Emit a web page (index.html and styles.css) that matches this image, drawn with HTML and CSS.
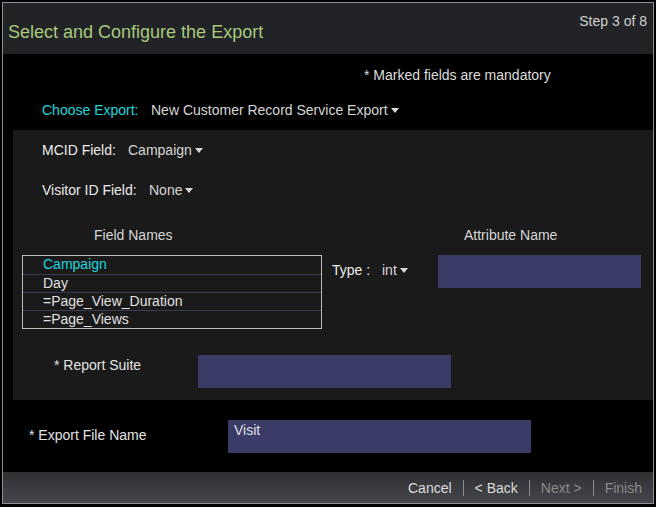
FILE: index.html
```html
<!DOCTYPE html>
<html>
<head>
<meta charset="utf-8">
<link rel="stylesheet" href="styles.css">
</head>
<body>
<div class="frame">
  <header class="header">
    <h1 class="title">Select and Configure the Export</h1>
    <div class="step">Step 3 of 8</div>
  </header>
  <main class="main">
    <div class="mandatory">* Marked fields are mandatory</div>
    <div class="choose">
      <span class="choose-label">Choose Export:</span>
      <span class="dropdown">New Customer Record Service Export<span class="caret"></span></span>
    </div>
    <section class="panel">
      <div class="field mcid">
        <span class="label">MCID Field:</span>
        <span class="dropdown">Campaign<span class="caret"></span></span>
      </div>
      <div class="field visitor">
        <span class="label">Visitor ID Field:</span>
        <span class="dropdown">None<span class="caret"></span></span>
      </div>
      <div class="col-heads">
        <span class="head-fields">Field Names</span>
        <span class="head-attr">Attribute Name</span>
      </div>
      <div class="mapping">
        <ul class="list">
          <li class="selected">Campaign</li>
          <li>Day</li>
          <li>=Page_View_Duration</li>
          <li>=Page_Views</li>
        </ul>
        <div class="type">
          <span class="type-label">Type :</span>
          <span class="dropdown">int<span class="caret"></span></span>
        </div>
        <div class="input attr-input"></div>
      </div>
      <div class="suite">
        <span class="suite-label">* Report Suite</span>
        <div class="input suite-input"></div>
      </div>
    </section>
    <div class="filename">
      <span class="filename-label">* Export File Name</span>
      <div class="input filename-input">Visit</div>
    </div>
  </main>
  <footer class="footer">
    <span class="btn">Cancel</span>
    <span class="sep"></span>
    <span class="btn">&lt; Back</span>
    <span class="sep"></span>
    <span class="btn disabled">Next &gt;</span>
    <span class="sep"></span>
    <span class="btn disabled">Finish</span>
  </footer>
</div>
</body>
</html>
```
FILE: styles.css
```css
html, body {
  margin: 0;
  padding: 0;
  background: #000;
}
body {
  font-family: "Liberation Sans", Arial, sans-serif;
  font-size: 14px;
  color: #e2e2e2;
}
.frame {
  margin: 2px;
  width: 650px;
  height: 500px;
  border: 1px solid #8e8e8e;
  background: #000;
  display: flex;
  flex-direction: column;
}
.header {
  height: 51px;
  background: #222327;
  display: flex;
  justify-content: space-between;
  align-items: flex-start;
}
.title {
  margin: 0;
  padding: 17px 0 0 5px;
  font-size: 18px;
  line-height: 24px;
  font-weight: normal;
  color: #a8c97b;
}
.step {
  padding: 10px 6px 0 0;
  font-size: 14px;
  line-height: 16px;
  color: #d0d0d0;
}
.main {
  flex: 1;
  display: flex;
  flex-direction: column;
}
.mandatory {
  margin-top: 11px;
  padding-left: 361px;
  line-height: 20px;
  color: #dcdcdc;
}
.choose {
  margin-top: 15px;
  padding-left: 39px;
  line-height: 20px;
  display: flex;
}
.choose-label {
  color: #1fd6de;
  width: 109px;
}
.dropdown {
  color: #d6d6d6;
  display: inline-flex;
  align-items: center;
}
.caret {
  display: inline-block;
  margin-left: 3px;
  width: 0;
  height: 0;
  border-left: 4px solid transparent;
  border-right: 4px solid transparent;
  border-top: 5px solid #d8d8d8;
}
.panel {
  margin: 10px 0 0 10px;
  height: 270px;
  background: #1a1a1a;
  display: flex;
  flex-direction: column;
}
.field {
  display: flex;
  line-height: 20px;
  padding-left: 29px;
}
.label {
  color: #ececec;
}
.mcid {
  margin-top: 10px;
}
.mcid .label {
  width: 86px;
}
.visitor {
  margin-top: 20px;
}
.visitor .label {
  width: 107px;
}
.col-heads {
  margin-top: 25px;
  line-height: 20px;
  display: flex;
  color: #d6d6d6;
}
.head-fields {
  padding-left: 81px;
  width: 370px;
}
.head-attr {
  padding-left: 0;
}
.mapping {
  margin-top: 10px;
  padding-left: 9px;
  display: flex;
  align-items: flex-start;
}
.list {
  margin: 0;
  padding: 0;
  list-style: none;
  width: 298px;
  border: 1px solid #bdbdbd;
}
.list li {
  height: 17px;
  line-height: 17px;
  padding-left: 20px;
  border-top: 1px solid #3c3b52;
  color: #e0e0e0;
}
.list li:first-child {
  border-top: none;
  height: 18px;
}
.list li.selected {
  color: #1fd6de;
}
.type {
  margin-left: 10px;
  margin-top: 5px;
  line-height: 20px;
  display: flex;
  width: 106px;
}
.type-label {
  color: #ececec;
  width: 50px;
}
.input {
  background: #3b3b67;
  height: 33px;
  box-sizing: border-box;
}
.attr-input {
  width: 203px;
}
.suite {
  margin-top: 26px;
  display: flex;
  align-items: flex-start;
}
.suite-label {
  padding-left: 41px;
  width: 144px;
  margin-top: 0;
  line-height: 20px;
}
.suite-input {
  width: 253px;
}
.filename {
  margin-top: 20px;
  display: flex;
  align-items: flex-start;
}
.filename-label {
  padding-left: 26px;
  width: 199px;
  margin-top: 5px;
  line-height: 20px;
}
.filename-input {
  width: 303px;
  padding: 2px 0 0 6px;
  line-height: 16px;
  color: #e0e0e0;
}
.footer {
  height: 31px;
  background: linear-gradient(#2f3034, #46474c);
  display: flex;
  justify-content: flex-end;
  align-items: center;
  padding-right: 11px;
  gap: 11px;
}
.btn {
  color: #dcdcdc;
  line-height: 20px;
}
.btn.disabled {
  color: #8a8a8a;
}
.sep {
  width: 1px;
  height: 16px;
  background: #8c8c8c;
}
```
